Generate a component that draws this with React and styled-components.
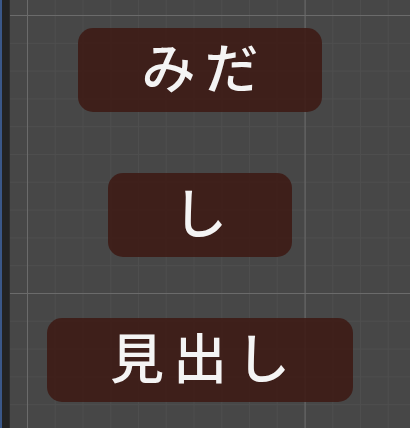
import React from 'react';
import styled, { createGlobalStyle } from 'styled-components';

const GlobalStyle = createGlobalStyle`
  html, body {
    margin: 0;
    padding: 0;
    background: #474747;
  }
`;

const labels = [
  { text: 'みだ', width: 244 },
  { text: 'し', width: 184 },
  { text: '見出し', width: 306 },
];

const App = () => {
  return (
    <Window>
      <GlobalStyle />
      <Sidebar />
      <Scene>
        {labels.map((l) => (
          <Label key={l.text} $width={l.width}>
            {l.text}
          </Label>
        ))}
      </Scene>
    </Window>
  );
};

export default App;

const Window = styled.div`
  display: flex;
  width: 410px;
  height: 428px;
  overflow: hidden;
`;

const Sidebar = styled.div`
  width: 7px;
  flex-shrink: 0;
  background: #232323;
  border-left: 2px solid #3a5788;
  border-right: 1px solid #2c2c2c;
`;

const Scene = styled.div`
  flex: 1;
  display: flex;
  flex-direction: column;
  align-items: center;
  gap: 61px;
  padding: 28px 20px 0 0;
  background-color: #474747;
  background-image:
    linear-gradient(to right, #6b6b6b 1px, transparent 1px),
    linear-gradient(to bottom, #6b6b6b 1px, transparent 1px),
    linear-gradient(to right, #4e4e4e 1px, transparent 1px),
    linear-gradient(to bottom, #4e4e4e 1px, transparent 1px);
  background-size:
    277.6px 277.6px,
    277.6px 278px,
    27.76px 27.76px,
    27.8px 27.8px;
  background-position:
    17px 0,
    0 15px,
    17px 0,
    0 15px;
`;

const Label = styled.div`
  width: ${(p) => p.$width}px;
  height: 84px;
  box-sizing: border-box;
  display: flex;
  align-items: center;
  justify-content: center;
  background: rgba(62, 26, 20, 0.88);
  border-radius: 15px;
  color: #f4f4f4;
  font-family: "Noto Sans CJK JP", "Noto Sans CJK SC", sans-serif;
  font-size: 54px;
  font-weight: 500;
  letter-spacing: 9px;
  padding: 0 0 8px 9px;
  line-height: 1;
`;
